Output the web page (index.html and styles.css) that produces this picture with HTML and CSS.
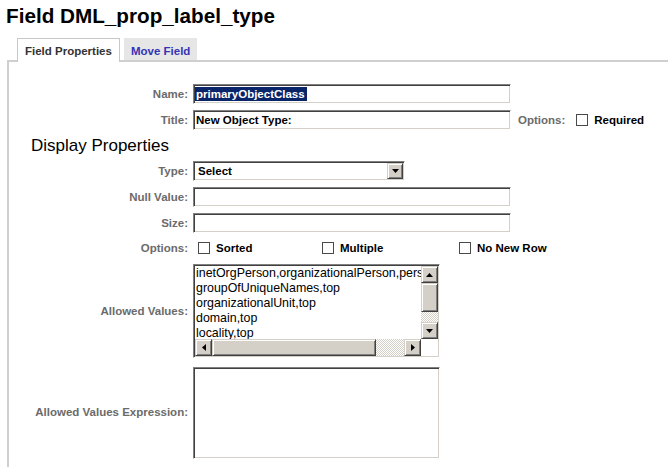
FILE: index.html
```html
<!DOCTYPE html>
<html>
<head>
<meta charset="utf-8">
<link rel="stylesheet" href="styles.css">
</head>
<body>
<h1 class="page-title">Field DML_prop_label_type</h1>
<div class="tabs">
  <div class="tab tab-active">Field Properties</div>
  <div class="tab tab-link">Move Field</div>
</div>
<div class="panel">
  <div class="form">
    <div class="lbl">Name:</div>
    <div class="field inset"><span class="selected">primaryObjectClass</span></div>

    <div class="lbl">Title:</div>
    <div class="field inset">New Object Type:</div>
    <div class="inline-opts">
      <span class="lbl-inline">Options:</span>
      <span class="check"></span>
      <span class="check-text">Required</span>
    </div>

    <div class="section">Display Properties</div>

    <div class="lbl">Type:</div>
    <div class="select inset">
      <span class="select-text">Select</span>
      <span class="select-btn raised">
        <svg width="7" height="4" viewBox="0 0 7 4"><polygon points="0,0 7,0 3.5,4" fill="#000"/></svg>
      </span>
    </div>

    <div class="lbl">Null Value:</div>
    <div class="field inset"></div>

    <div class="lbl">Size:</div>
    <div class="field inset"></div>

    <div class="lbl">Options:</div>
    <div class="opt-row">
      <span class="opt opt-1"><span class="check"></span><span class="check-text">Sorted</span></span>
      <span class="opt opt-2"><span class="check"></span><span class="check-text">Multiple</span></span>
      <span class="opt"><span class="check"></span><span class="check-text">No New Row</span></span>
    </div>

    <div class="lbl">Allowed Values:</div>
    <div class="listbox inset">
      <div class="list-items">
        <div>inetOrgPerson,organizationalPerson,person,top</div>
        <div>groupOfUniqueNames,top</div>
        <div>organizationalUnit,top</div>
        <div>domain,top</div>
        <div>locality,top</div>
      </div>
      <div class="vscroll">
        <span class="sbtn raised"><svg width="7" height="4" viewBox="0 0 7 4"><polygon points="3.5,0 7,4 0,4" fill="#000"/></svg></span>
        <span class="vthumb raised"></span>
        <span class="track"></span>
        <span class="sbtn raised"><svg width="7" height="4" viewBox="0 0 7 4"><polygon points="0,0 7,0 3.5,4" fill="#000"/></svg></span>
      </div>
      <div class="hscroll">
        <span class="sbtn raised"><svg width="4" height="7" viewBox="0 0 4 7"><polygon points="0,3.5 4,0 4,7" fill="#000"/></svg></span>
        <span class="hthumb raised"></span>
        <span class="track"></span>
        <span class="sbtn raised"><svg width="4" height="7" viewBox="0 0 4 7"><polygon points="0,0 4,3.5 0,7" fill="#000"/></svg></span>
      </div>
      <div class="corner"></div>
    </div>

    <div class="lbl lbl-expr">Allowed Values Expression:</div>
    <textarea class="expr inset"></textarea>
  </div>
</div>
</body>
</html>
```
FILE: styles.css
```css
html, body {
  margin: 0;
  padding: 0;
  background: #fff;
}
body {
  font-family: "Liberation Sans", Arial, sans-serif;
  color: #000;
  width: 668px;
  height: 467px;
  overflow: hidden;
}
.page-title {
  margin: 0;
  padding: 4px 0 0 6px;
  font-size: 20.7px;
  line-height: 23px;
  font-weight: bold;
}
.tabs {
  display: flex;
  gap: 4px;
  margin-top: 11px;
  padding-left: 17px;
  height: 22px;
}
.tab {
  box-sizing: border-box;
  height: 22px;
  padding: 6px 7px 0;
  font-size: 11.5px;
  line-height: 14px;
  font-weight: bold;
  white-space: nowrap;
}
.tab-active {
  position: relative;
  z-index: 1;
  height: 24px;
  margin-bottom: -2px;
  padding-top: 5px;
  background: #fff;
  border: 1px solid #c8c8c8;
  border-bottom: 0;
  color: #333;
}
.tab-link {
  background: #e6e6e6;
  color: #3434b4;
}
.panel {
  margin-left: 7px;
  border-left: 2px solid #cfcfcf;
  border-top: 2px solid #cfcfcf;
  padding-top: 22px;
  height: 383px;
}
.form {
  display: grid;
  grid-template-columns: 179px 318px auto;
  column-gap: 5px;
  row-gap: 6px;
  align-items: center;
}
.lbl {
  grid-column: 1;
  text-align: right;
  font-size: 11.5px;
  font-weight: bold;
  color: #6b6b6b;
  white-space: nowrap;
}
.inset {
  box-sizing: border-box;
  border: 1px solid;
  border-color: #808080 #fff #fff #808080;
  box-shadow: inset 1px 1px 0 #404040, inset -1px -1px 0 #d4d0c8;
  background: #fff;
}
.field {
  height: 20px;
  display: flex;
  align-items: center;
  padding-left: 2px;
  font-size: 11.5px;
  font-weight: bold;
  white-space: nowrap;
}
.selected {
  margin-left: -1px;
  padding: 0 2px 0 1px;
  background: #0a246a;
  color: #fff;
  line-height: 14px;
}
.inline-opts {
  display: flex;
  align-items: center;
  padding-left: 2px;
}
.lbl-inline {
  font-size: 11.5px;
  font-weight: bold;
  color: #6b6b6b;
  margin-right: 11px;
}
.check {
  box-sizing: border-box;
  display: inline-block;
  width: 12px;
  height: 12px;
  border: 1px solid #4a4a4a;
  background: #fff;
  flex: none;
}
.check-text {
  margin-left: 6px;
  font-size: 11.5px;
  font-weight: bold;
  white-space: nowrap;
}
.section {
  grid-column: 1 / -1;
  margin-top: 1px;
  padding-left: 22px;
  font-size: 17px;
  line-height: 18px;
  color: #000;
}
.select {
  grid-column: 2;
  width: 212px;
  height: 20px;
  display: flex;
  align-items: stretch;
  padding: 1px;
}
.select-text {
  flex: 1;
  display: flex;
  align-items: center;
  padding-left: 3px;
  font-size: 11.5px;
  font-weight: bold;
}
.raised {
  box-sizing: border-box;
  background: #d4d0c8;
  border: 1px solid;
  border-color: #d4d0c8 #404040 #404040 #d4d0c8;
  box-shadow: inset 1px 1px 0 #fff, inset -1px -1px 0 #808080;
}
.select-btn {
  width: 16px;
  display: flex;
  align-items: center;
  justify-content: center;
}
.opt-row {
  grid-column: 2 / span 2;
  display: flex;
  align-items: center;
  height: 18px;
  padding-left: 5px;
}
.opt {
  display: flex;
  align-items: center;
}
.opt-1 { width: 124px; }
.opt-2 { width: 137px; }
.listbox {
  grid-column: 2;
  margin-top: 1px;
  width: 247px;
  height: 94px;
  padding: 1px;
  display: grid;
  grid-template-columns: 226px 17px;
  grid-template-rows: 73px 17px;
}
.list-items {
  overflow: hidden;
  white-space: nowrap;
  padding-left: 1px;
  font-size: 12.4px;
  line-height: 15px;
}
.vscroll {
  display: flex;
  flex-direction: column;
}
.hscroll {
  display: flex;
}
.sbtn {
  width: 17px;
  height: 17px;
  flex: none;
  display: flex;
  align-items: center;
  justify-content: center;
}
.vthumb {
  height: 29px;
  flex: none;
}
.hthumb {
  width: 164px;
  flex: none;
}
.track {
  flex: 1;
  background-color: #fff;
  background-image: repeating-conic-gradient(#d4d0c8 0 25%, #fff 0 50%);
  background-size: 2px 2px;
}
.corner {
  background: #fff;
}
.expr {
  grid-column: 2;
  display: block;
  margin: 3px 0 0;
  width: 247px;
  height: 92px;
  padding: 0;
  resize: none;
  outline: none;
  font-family: inherit;
}
```
